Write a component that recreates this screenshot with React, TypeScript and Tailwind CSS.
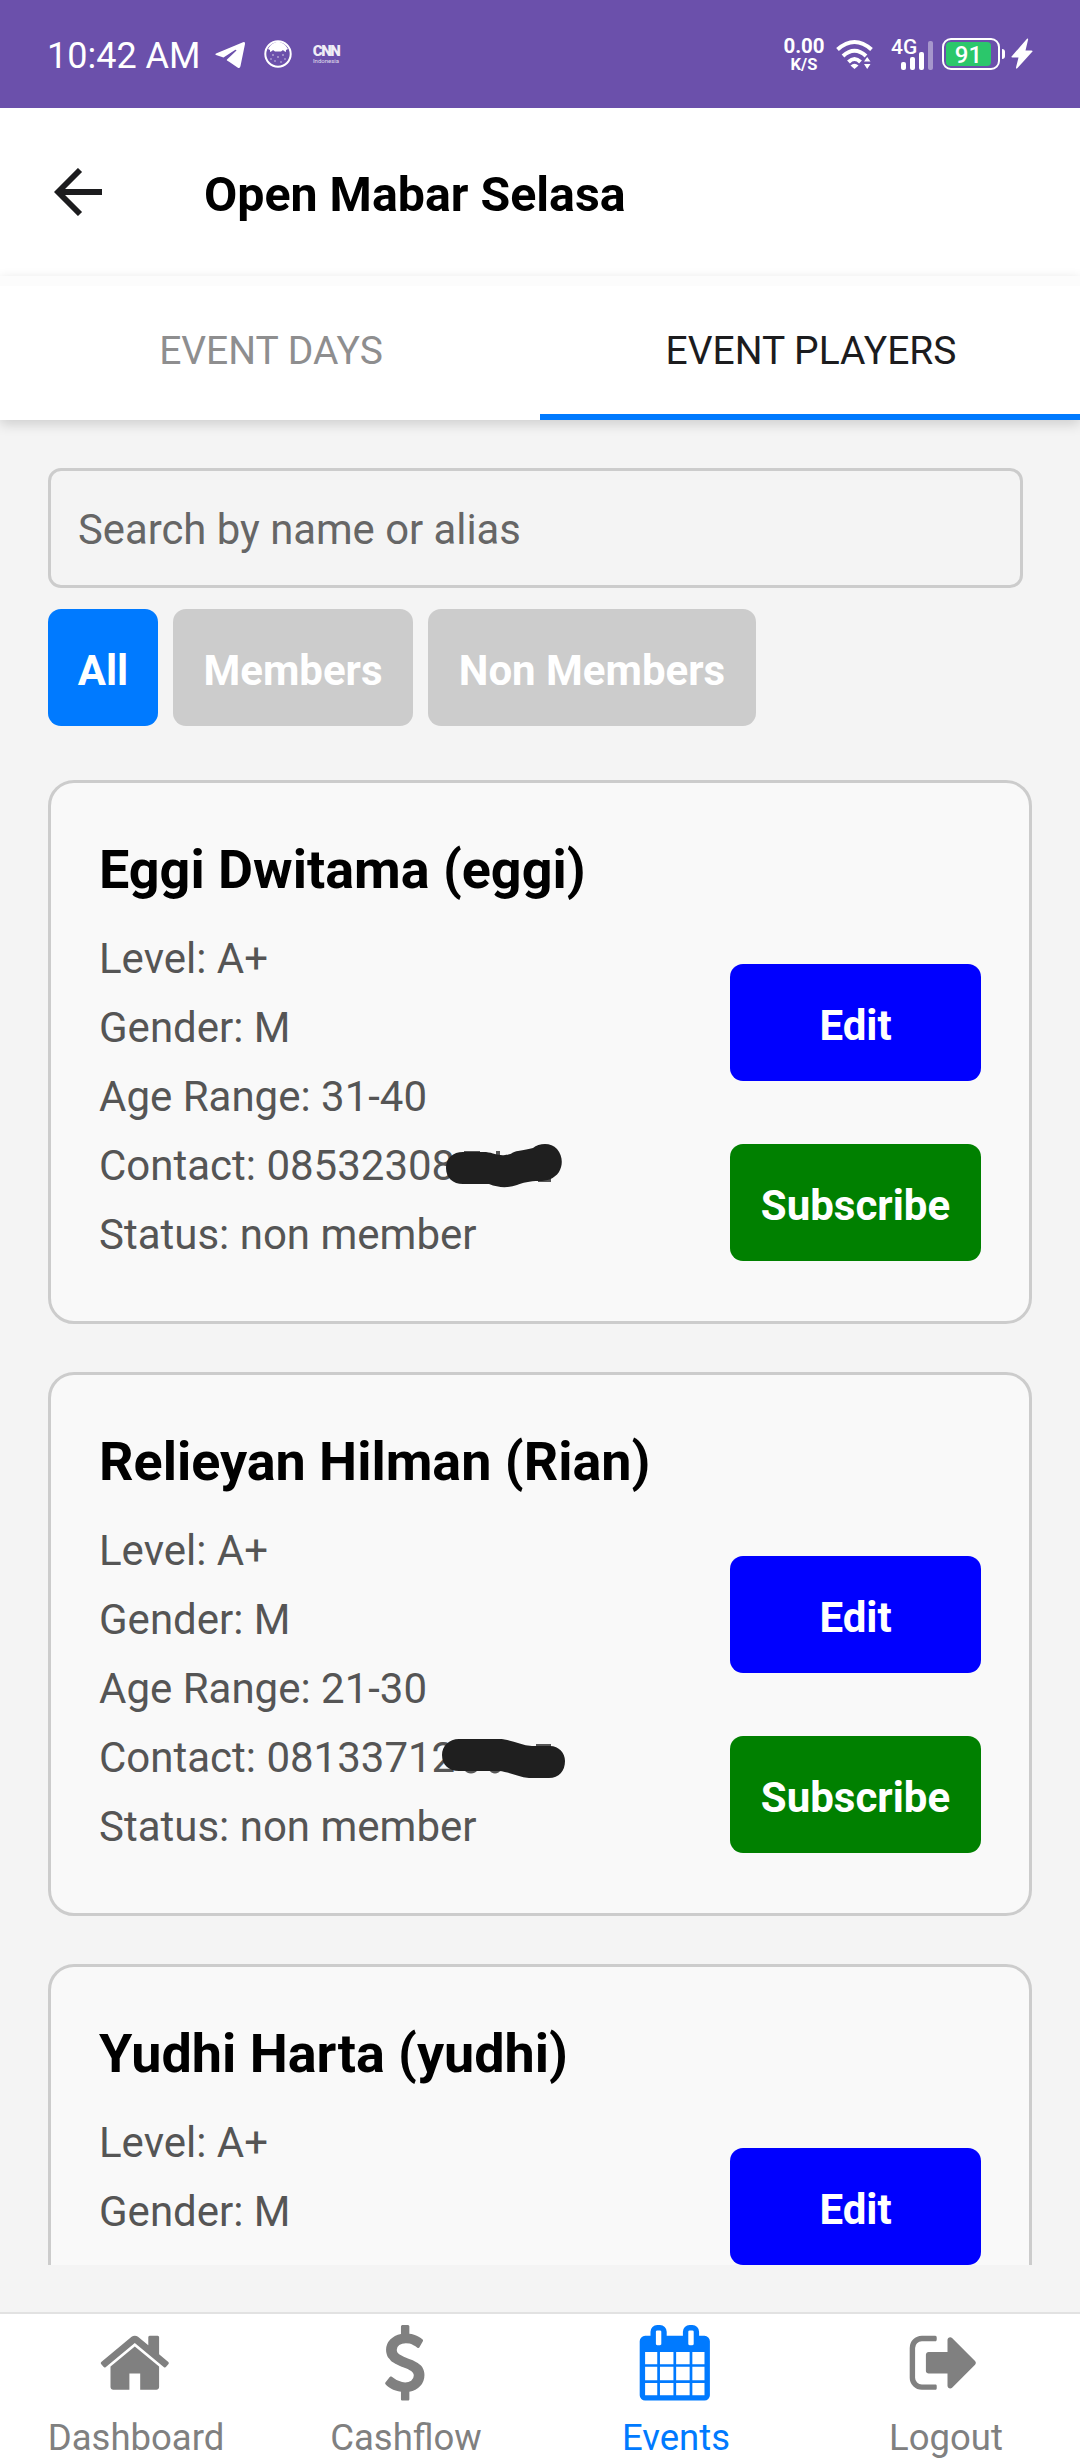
import React from "react";

type Player = {
  name: string;
  details: string[];
  contact?: string;
  status?: string;
  mark?: React.ReactNode;
};

const Mark1 = () => (
  <svg className="absolute left-[343px] top-[9px] h-[50px] w-[125px]" viewBox="0 0 125 50">
    <path d="M22 11h16v4h-16zM54 11h4v6h-4zM96 38h13v4h-13z" fill="#555" />
    <path fill="#1f1f1f" d="M4 28C4 18 11 12 21 12L44 12C52 13 57 16 63 15C69 15 70 12 76 11C82 10 87 9 91 8C97 3 109 2 115 9C121 16 121 25 117 32C112 39 105 41 97 41C88 41 80 43 75 45C66 48 57 48 47 44L21 44C11 44 4 38 4 28Z" />
  </svg>
);

const Mark2 = () => (
  <svg className="absolute left-[343px] top-[9px] h-[50px] w-[125px]" viewBox="0 0 125 50">
    <path d="M21 37Q29 46 37 37ZM46 37Q53 46 60 37ZM94 12h15v5h-15z" fill="#555" />
    <path fill="#1f1f1f" d="M0 23C0 14 7 7 17 7L57 7C68 7 78 13 90 14L108 14C117 14 123 21 123 29C123 39 117 46 107 46L87 46C76 45 68 40 57 39L17 39C7 39 0 33 0 23Z" />
  </svg>
);

const players: Player[] = [
  { name: "Eggi Dwitama (eggi)", details: ["Level: A+", "Gender: M", "Age Range: 31-40"], contact: "Contact: 08532308", status: "Status: non member", mark: <Mark1 /> },
  { name: "Relieyan Hilman (Rian)", details: ["Level: A+", "Gender: M", "Age Range: 21-30"], contact: "Contact: 08133712", status: "Status: non member", mark: <Mark2 /> },
  { name: "Yudhi Harta (yudhi)", details: ["Level: A+", "Gender: M"] },
];

function StatusBar() {
  return (
    <div className="flex h-[108px] shrink-0 items-center bg-[#6b50ab] pl-[47px] pr-[47px] text-white">
      <span className="w-[153px] whitespace-nowrap pt-[3px] text-[36px] leading-[42px]">10:42 AM</span>
      <svg className="ml-[14px] mt-[2px] h-[28px] w-[32px]" viewBox="0 0 32 28" fill="currentColor">
        <path d="M2 12.5L29 1.2Q31.500 .5 31 3L26.500 25Q26 28 23.500 26.500L15.500 21L13 19.500Q12.500 19 13 18.500L22.500 9.500Q22 8.500 21 9L9.500 16.500L2 14Q.5 13.300 2 12.500Z" />
      </svg>
      <svg className="ml-[18px] h-[28px] w-[28px]" viewBox="0 0 28 28" fill="none">
        <circle cx="14" cy="14" r="12.700" stroke="white" strokeWidth="2" />
        <path d="M4 9C7 4 10 2 14 2s7 2 10 7l-2 1 0 2-2-1-1-1-2 1.500h-6l-2-1.500-1 1-2 1 0-2z" fill="white" />
        <g fill="white" opacity=".8">
          <circle cx="9" cy="15" r=".8" /><circle cx="19" cy="15" r=".8" /><circle cx="14" cy="17" r=".8" />
          <circle cx="7" cy="19" r=".7" /><circle cx="21" cy="19" r=".7" /><circle cx="11" cy="21" r=".7" />
          <circle cx="17" cy="22" r=".7" />
        </g>
      </svg>
      <div className="ml-[19px] flex w-[30px] flex-col items-center pt-[1px]">
        <span className="text-[15px] font-black leading-[12px] tracking-[-1.500px] opacity-90">CNN</span>
        <span className="text-[6px] leading-[8px] opacity-80">Indonesia</span>
      </div>
      <div className="ml-auto flex w-[42px] flex-col items-center font-bold">
        <span className="text-[20.500px] leading-[20px]">0.00</span>
        <span className="text-[16.500px] leading-[17px]">K/S</span>
      </div>
      <svg className="ml-[10px] h-[32px] w-[40px]" viewBox="0 0 40 32" fill="none" stroke="white" strokeWidth="4">
        <path d="M2.500 11.500Q19.500 -3.500 36.500 11.500" />
        <path d="M8 18Q19.500 7.500 31 18" />
        <path d="M13.500 24Q19.500 18 25.500 24" />
        <path d="M15.500 27.500Q19.500 24 23.500 27.500L19.500 31Z" fill="white" stroke="none" />
        <path d="M29 23.500L32.200 19L35.500 23.500ZM29 26L32.200 31L35.500 26Z" fill="white" stroke="none" />
      </svg>
      <div className="relative ml-[17px] h-[34px] w-[44px]">
        <span className="absolute left-[-1px] top-[-2px] text-[21px] font-medium leading-[24px]">4G</span>
        <svg className="h-[34px] w-[44px]" viewBox="0 0 44 34" fill="white">
          <rect x="9" y="25" width="5" height="8" rx="2" />
          <rect x="18" y="20" width="5" height="13" rx="2" />
          <rect x="27" y="15" width="5" height="18" rx="2" />
          <rect x="36" y="4" width="5" height="29" rx="2" opacity=".4" />
        </svg>
      </div>
      <div className="ml-[6px] flex h-[32px] w-[58px] items-center rounded-[9px] border-2 border-white pl-[2px]">
        <div className="flex h-[24px] w-[45px] items-center justify-center rounded-[4px] bg-[#2bc76b] pt-[1px] text-[24px] font-medium leading-[24px]">91</div>
      </div>
      <div className="ml-[2px] h-[10px] w-[3px] rounded-r-[3px] bg-white" />
      <svg className="ml-[6px] h-[32px] w-[22px]" viewBox="0 0 22 32" fill="white">
        <path d="M16 .8Q17.500 0 17 2L14.500 12.500H20.500Q22.500 12.500 21 14L6.500 30Q5 31.500 5 29.500L7.500 19.500H1.500Q-.5 19.500 1 18Z" />
      </svg>
    </div>
  );
}

function Header() {
  return (
    <div className="flex h-[168px] shrink-0 items-center bg-white pl-[54px]">
      <svg className="h-[48px] w-[48px]" viewBox="0 0 48 48" fill="none" stroke="#1c1c1e" strokeWidth="5.800">
        <path d="M48 24H5M26 2L4 24L26 46" />
      </svg>
      <h1 className="ml-[102px] mt-[6px] text-[48.300px] font-bold leading-[56px] text-black">Open Mabar Selasa</h1>
    </div>
  );
}

function Tabs() {
  return (
    <div className="relative z-10 grid h-[144px] shrink-0 grid-cols-2 bg-white text-[39px] shadow-[0_4px_12px_rgba(0,0,0,0.16)]">
      <div className="flex items-center justify-center border-t-[10px] border-[#fcfcfc] pb-[4px] pl-[2px] text-[#8e8e8f]">EVENT DAYS</div>
      <div className="flex flex-col border-t-[10px] border-[#fcfcfc] text-[#1c1c1e]">
        <div className="flex flex-1 items-center justify-center pl-[2px] pt-[2px]">EVENT PLAYERS</div>
        <div className="h-[6px] bg-[#007aff]" />
      </div>
    </div>
  );
}

function PlayerCard({ player }: { player: Player }) {
  return (
    <article className="flex h-[544px] w-[984px] shrink-0 items-center justify-between rounded-[26px] border-[3px] border-[#ccc] bg-[#f9f9f9] px-[48px]">
      <div className="h-[442px] pt-[4px]">
        <h2 className="mb-[19px] h-[70px] whitespace-nowrap text-[53.900px] font-bold leading-[70px] text-black">{player.name}</h2>
        <div className="text-[42px] leading-[69px] text-[#555]">
          {player.details.map((line) => (
            <p key={line}>{line}</p>
          ))}
          {player.contact && (
            <p className="relative">
              {player.contact}
              {player.mark}
            </p>
          )}
          {player.status && <p>{player.status}</p>}
        </div>
      </div>
      <div className="flex w-[251px] flex-col gap-[63px] pt-[121px] text-[42px] font-bold text-white">
        <button className="h-[117px] rounded-[13px] bg-[#0000ff] pt-[5px]">Edit</button>
        <button className="h-[117px] rounded-[13px] bg-[#008000] pt-[5px]">Subscribe</button>
      </div>
    </article>
  );
}

const navItems = [
  {
    label: "Dashboard",
    path: "M1472 992v480q0 26-19 45t-45 19h-384v-384h-256v384h-384q-26 0-45-19t-19-45v-480q0-1 .5-3t.5-3l575-474 575 474q1 2 1 6zm223-69l-62 74q-8 9-21 11h-3q-13 0-21-7l-692-577-692 577q-12 8-24 7-13-2-21-11l-62-74q-8-10-7-23.5t11-21.5l719-599q32-26 76-26t76 26l244 204v-195q0-14 9-23t23-9h192q14 0 23 9t9 23v408l219 182q10 8 11 21.5t-7 23.5z",
  },
  {
    label: "Cashflow",
    path: "M1362 1185q0 153-99.5 263.5t-258.5 136.5v175q0 14-9 23t-23 9h-135q-13 0-22.5-9.5t-9.5-22.5v-175q-66-9-127.5-31t-101.5-44.5-74-48-46.5-37.5-17.5-18q-17-21-2-41l103-135q7-10 23-12 15-2 24 9l2 2q113 99 243 125 37 8 74 8 81 0 142.5-43t61.5-122q0-28-15-53t-33.5-42-58.5-37.5-66-32-80-32.5q-39-16-61.5-25t-61.5-26.5-62.5-31-56.5-35.5-53.5-42.5-43.5-49-35.5-58-21-66.5-8.5-78q0-138 98-242t255-134v-180q0-13 9.5-22.5t22.5-9.5h135q14 0 23 9t9 23v176q57 6 110.5 23t87 33.5 63.5 37.5 39 29 15 14q17 18 5 38l-81 146q-8 15-23 16-14 3-27-7-3-3-14.5-12t-39-26.5-58.5-32-74.5-26-85.5-11.5q-95 0-155 43t-60 111q0 26 8.5 48t29.5 41.5 39.5 33 56 31 60.5 27 70 27.5q53 20 81 31.5t76 35 75.5 42.5 62 50 53 63.5 31.5 76.5 13 94z",
  },
  {
    label: "Events",
    active: true,
    path: "M192 1664h288v-288h-288v288zm352 0h320v-288h-320v288zm-352-352h288v-320h-288v320zm352 0h320v-320h-320v320zm-352-384h288v-288h-288v288zm736 736h320v-288h-320v288zm-384-736h320v-288h-320v288zm768 736h288v-288h-288v288zm-384-352h320v-320h-320v320zm-352-864v-288q0-13-9.5-22.5t-22.5-9.5h-64q-13 0-22.5 9.5t-9.5 22.5v288q0 13 9.5 22.5t22.5 9.5h64q13 0 22.5-9.5t9.5-22.5zm736 864h288v-320h-288v320zm-384-384h320v-288h-320v288zm384 0h288v-288h-288v288zm32-480v-288q0-13-9.5-22.5t-22.5-9.5h-64q-13 0-22.5 9.5t-9.5 22.5v288q0 13 9.5 22.5t22.5 9.5h64q13 0 22.5-9.5t9.5-22.5zm384-64v1280q0 52-38 90t-90 38h-1408q-52 0-90-38t-38-90v-1280q0-52 38-90t90-38h128v-96q0-66 47-113t113-47h64q66 0 113 47t47 113v96h384v-96q0-66 47-113t113-47h64q66 0 113 47t47 113v96h128q52 0 90 38t38 90z",
  },
  {
    label: "Logout",
    path: "M704 1440q0 4 1 20t.5 26.5-3 23.5-10 19.5-20.5 6.5h-320q-119 0-203.5-84.5t-84.5-203.5v-704q0-119 84.5-203.5t203.5-84.5h320q13 0 22.5 9.5t9.5 22.5q0 4 1 20t.5 26.5-3 23.5-10 19.5-20.5 6.5h-320q-66 0-113 47t-47 113v704q0 66 47 113t113 47h312l11.5 1 11.5 3 8 5.5 7 9 2 13.5zm928-544q0 26-19 45l-544 544q-19 19-45 19t-45-19-19-45v-288h-448q-26 0-45-19t-19-45v-384q0-26 19-45t45-19h448v-288q0-26 19-45t45-19 45 19l544 544q19 19 19 45z",
  },
];

function BottomNav() {
  return (
    <nav className="grid h-[148px] shrink-0 grid-cols-4 border-t-2 border-[#e2e2e2] bg-white">
      {navItems.map((item) => (
        <div key={item.label} className={`flex flex-col items-center pt-[11px] ${item.active ? "text-[#007aff]" : "text-[#808080]"}`}>
          <svg className="h-[75.600px] w-[75.600px]" viewBox="0 0 1792 1792" fill="currentColor">
            <path d={item.path} />
          </svg>
          <span className="mt-[15px] pl-[2px] text-[36.500px] leading-[44px]">{item.label}</span>
        </div>
      ))}
    </nav>
  );
}

export default function App() {
  return (
    <div className="flex h-[2460px] w-[1080px] flex-col overflow-hidden bg-[#f4f4f4] font-['Roboto',sans-serif]">
      <StatusBar />
      <Header />
      <Tabs />
      <main className="flex min-h-0 flex-1 flex-col px-[48px] pt-[48px] pb-[47px]">
        <input
          className="h-[120px] w-[975px] shrink-0 rounded-[13px] border-[3px] border-[#ccc] bg-transparent pl-[27px] pt-[3px] text-[41.800px] placeholder:text-[#666] placeholder:opacity-100"
          placeholder="Search by name or alias"
        />
        <div className="mt-[21px] flex h-[117px] shrink-0 gap-[15px] text-[42px] font-bold text-white">
          <button className="w-[110px] rounded-[13px] bg-[#007aff] pt-[5px]">All</button>
          <button className="w-[240px] rounded-[13px] bg-[#ccc] pt-[5px]">Members</button>
          <button className="w-[328px] rounded-[13px] bg-[#ccc] pt-[5px]">Non Members</button>
        </div>
        <div className="mt-[54px] flex min-h-0 flex-1 flex-col gap-[48px] overflow-hidden">
          {players.map((player) => (
            <PlayerCard key={player.name} player={player} />
          ))}
        </div>
      </main>
      <BottomNav />
    </div>
  );
}
